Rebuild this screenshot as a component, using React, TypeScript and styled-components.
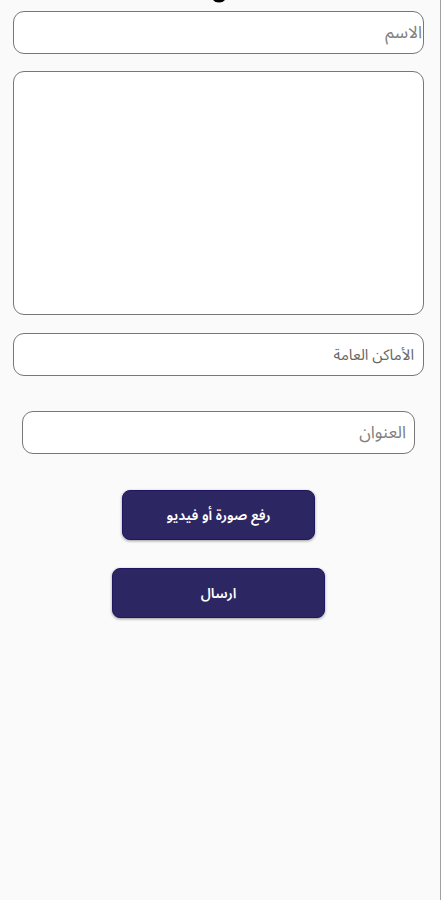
import React from "react";
import styled, { createGlobalStyle, css } from "styled-components";

const fontStack = `"Noto Sans Arabic", "Noto Naskh Arabic", "DejaVu Sans", sans-serif`;

const GlobalStyle = createGlobalStyle`
  *, *::before, *::after { box-sizing: border-box; }
  body { margin: 0; background: #fafafa; }
`;

const Screen = styled.main`
  min-height: 100vh;
  padding: 0 16px 0 13px;
  border-right: 1px solid #a0a0a0;
  background: #fafafa;
  font-family: ${fontStack};
  overflow: hidden;
`;

const HeadingEdge = styled.div`
  display: flex;
  justify-content: center;
  height: 11px;

  svg { display: block; }
`;

const Form = styled.form`
  display: flex;
  flex-direction: column;
  align-items: stretch;
`;

const outline = css`
  display: block;
  width: 100%;
  margin: 0;
  border: 1px solid #777;
  border-radius: 11px;
  background: #fff;
  color: #666;
  font-family: inherit;
  outline: none;

  &::placeholder { color: #808080; opacity: 1; }
`;

const TextField = styled.input<{ $inset?: number }>`
  ${outline}
  height: 43px;
  padding: 0 ${(p) => p.$inset ?? 1}px;
  font-size: 17px;
`;

const MessageField = styled.textarea`
  ${outline}
  height: 244px;
  margin: 17px 0 18px;
  padding: 8px;
  font-size: 17px;
  resize: none;
`;

const PlaceSelect = styled.select`
  ${outline}
  appearance: none;
  height: 43px;
  padding: 0 9px;
  font-size: 15px;
`;

const AddressRow = styled.div`
  padding: 35px 9px 0;
`;

const Action = styled.button<{ $width: string; $gap: number }>`
  align-self: center;
  width: ${(p) => p.$width};
  height: 50px;
  margin-top: ${(p) => p.$gap}px;
  padding: 0;
  border: 1px solid #1d1760;
  border-radius: 8px;
  background: #2c2663;
  box-shadow: 0 1px 3px rgba(0, 0, 0, 0.4);
  color: #fff;
  font-family: inherit;
  font-size: 14px;
  font-weight: 600;
`;

export default function App() {
  return (
    <>
      <GlobalStyle />
      <Screen dir="rtl" lang="ar">
        <HeadingEdge>
          <svg width="14" height="3" viewBox="0 0 14 3" aria-hidden="true">
            <path d="M1 0H13Q11 2.6 7 2.6T1 0Z" fill="#000" />
          </svg>
        </HeadingEdge>
        <Form onSubmit={(e) => e.preventDefault()}>
          <TextField type="text" placeholder="الاسم" aria-label="الاسم" />
          <MessageField />
          <PlaceSelect aria-label="الأماكن العامة">
            <option>الأماكن العامة</option>
          </PlaceSelect>
          <AddressRow>
            <TextField $inset={8} type="text" placeholder="العنوان" aria-label="العنوان" />
          </AddressRow>
          <Action type="button" $width="47%" $gap={36}>رفع صورة أو فيديو</Action>
          <Action type="submit" $width="52%" $gap={28}>ارسال</Action>
        </Form>
      </Screen>
    </>
  );
}
